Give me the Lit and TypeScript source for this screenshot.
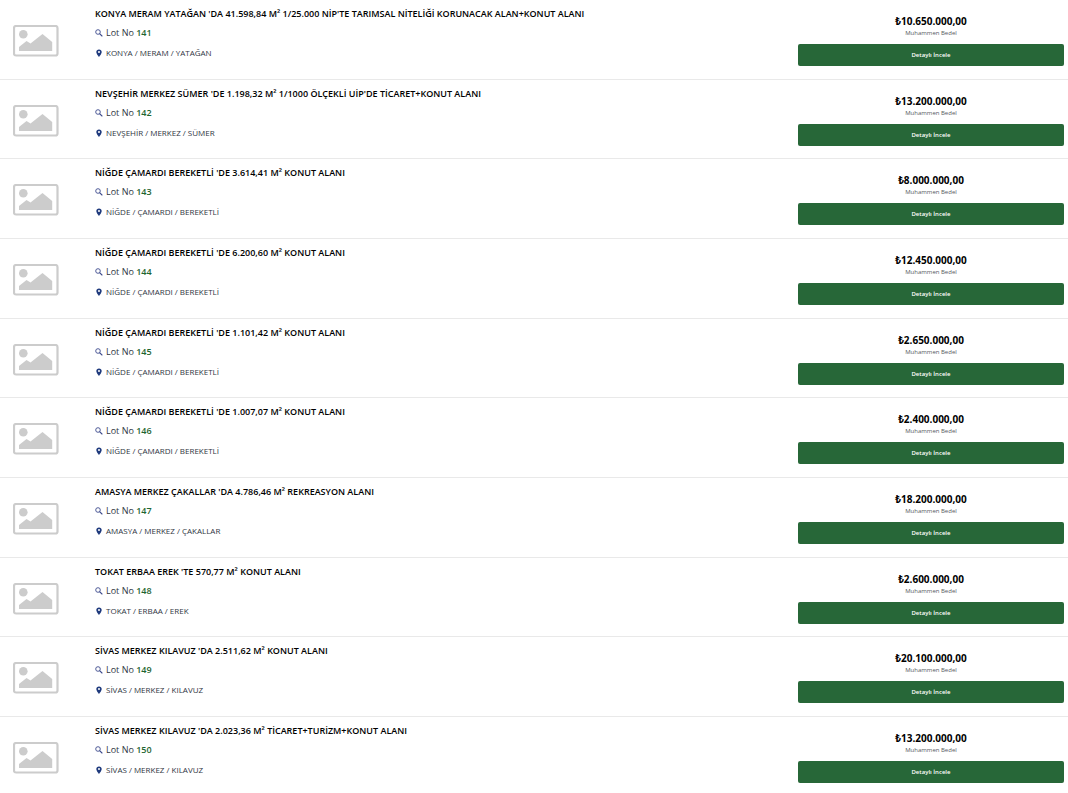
import { LitElement, html, css, svg } from "lit";
import { customElement, property } from "lit/decorators.js";

interface Lot {
  no: number;
  title: string;
  place: string;
  price: string;
}

const LOTS: Lot[] = [
  { no: 141, title: "KONYA MERAM YATAĞAN 'DA 41.598,84 M² 1/25.000 NİP'TE TARIMSAL NİTELİĞİ KORUNACAK ALAN+KONUT ALANI", place: "KONYA / MERAM / YATAĞAN", price: "₺10.650.000,00" },
  { no: 142, title: "NEVŞEHİR MERKEZ SÜMER 'DE 1.198,32 M² 1/1000 ÖLÇEKLİ UİP'DE TİCARET+KONUT ALANI", place: "NEVŞEHİR / MERKEZ / SÜMER", price: "₺13.200.000,00" },
  { no: 143, title: "NİĞDE ÇAMARDI BEREKETLİ 'DE 3.614,41 M² KONUT ALANI", place: "NİĞDE / ÇAMARDI / BEREKETLİ", price: "₺8.000.000,00" },
  { no: 144, title: "NİĞDE ÇAMARDI BEREKETLİ 'DE 6.200,60 M² KONUT ALANI", place: "NİĞDE / ÇAMARDI / BEREKETLİ", price: "₺12.450.000,00" },
  { no: 145, title: "NİĞDE ÇAMARDI BEREKETLİ 'DE 1.101,42 M² KONUT ALANI", place: "NİĞDE / ÇAMARDI / BEREKETLİ", price: "₺2.650.000,00" },
  { no: 146, title: "NİĞDE ÇAMARDI BEREKETLİ 'DE 1.007,07 M² KONUT ALANI", place: "NİĞDE / ÇAMARDI / BEREKETLİ", price: "₺2.400.000,00" },
  { no: 147, title: "AMASYA MERKEZ ÇAKALLAR 'DA 4.786,46 M² REKREASYON ALANI", place: "AMASYA / MERKEZ / ÇAKALLAR", price: "₺18.200.000,00" },
  { no: 148, title: "TOKAT ERBAA EREK 'TE 570,77 M² KONUT ALANI", place: "TOKAT / ERBAA / EREK", price: "₺2.600.000,00" },
  { no: 149, title: "SİVAS MERKEZ KILAVUZ 'DA 2.511,62 M² KONUT ALANI", place: "SİVAS / MERKEZ / KILAVUZ", price: "₺20.100.000,00" },
  { no: 150, title: "SİVAS MERKEZ KILAVUZ 'DA 2.023,36 M² TİCARET+TURİZM+KONUT ALANI", place: "SİVAS / MERKEZ / KILAVUZ", price: "₺13.200.000,00" },
];

const pictureIcon = svg`<svg class="picture" viewBox="0 0 46 32" aria-hidden="true">
  <rect x="1" y="1" width="43.500" height="29.500" rx="2" fill="#fff" stroke="#ccc" stroke-width="2.200"/>
  <circle cx="10.300" cy="9.200" r="4.300" fill="#ccc"/>
  <path d="M6 26v-4l7.500-6 4 2.500L29.500 9l9.700 8v9z" fill="#ccc"/>
</svg>`;

const searchIcon = svg`<svg class="icon" viewBox="0 0 8 8" aria-hidden="true">
  <circle cx="3" cy="3" r="2.300" fill="none" stroke="#3c4a8c" stroke-width=".9"/>
  <path d="M4.800 4.800L7 7" stroke="#3c4a8c" stroke-width="1.100" stroke-linecap="round"/>
</svg>`;

const pinIcon = svg`<svg class="icon" viewBox="0 0 8 8" aria-hidden="true">
  <path fill-rule="evenodd" fill="#1f3a7d" d="M4 .5C2.400.5 1.300 1.600 1.300 3.100 1.300 5 4 8 4 8s2.700-3 2.700-4.900C6.700 1.600 5.600.5 4 .5zM4 2.100a1 1 0 1 1 0 2 1 1 0 0 1 0-2z"/>
</svg>`;

@customElement("lot-row")
class LotRow extends LitElement {
  @property({ attribute: false }) lot!: Lot;

  static styles = css`
    :host {
      display: grid;
      grid-template-columns: 95px minmax(0, 1fr) 25%;
      align-items: start;
      padding: 8px 4px 13px 0;
      border-bottom: 1px solid #e9e9e9;
    }
    .picture {
      display: block;
      width: 46px;
      height: 32px;
      margin: 17px 0 0 13px;
    }
    .title {
      margin: 0 0 7px;
      font-size: 9px;
      line-height: 12px;
      font-weight: 600;
      color: #000;
    }
    .line {
      display: flex;
      align-items: center;
      gap: 3px;
      margin: 0 0 8px;
      font-size: 8px;
      line-height: 12px;
      color: #30363f;
    }
    .line:last-child {
      margin-bottom: 0;
    }
    .lot {
      font-size: 9px;
    }
    .icon {
      flex: none;
      width: 8px;
      height: 8px;
    }
    .number {
      font-weight: 600;
      color: #1f6531;
    }
    .offer {
      display: grid;
      padding-top: 6px;
      text-align: center;
    }
    .price {
      margin: 0;
      font-size: 10px;
      line-height: 14px;
      font-weight: 700;
      color: #000;
    }
    .caption {
      margin: 0 0 6px;
      font-size: 6px;
      line-height: 10px;
      color: #555a60;
    }
    .button {
      height: 22px;
      padding: 0;
      border: 0;
      border-radius: 2px;
      background: #276738;
      color: #fff;
      font: 600 6px/20px "Open Sans", sans-serif;
      cursor: pointer;
    }
  `;

  render() {
    const { no, title, place, price } = this.lot;
    return html`
      ${pictureIcon}
      <div class="details">
        <h2 class="title">${title}</h2>
        <p class="line lot">${searchIcon}<span>Lot No <b class="number">${no}</b></span></p>
        <p class="line">${pinIcon}<span>${place}</span></p>
      </div>
      <div class="offer">
        <p class="price">${price}</p>
        <p class="caption">Muhammen Bedel</p>
        <button class="button" type="button">Detaylı İncele</button>
      </div>
    `;
  }
}

@customElement("app-root")
class AppRoot extends LitElement {
  static styles = css`
    :host {
      display: block;
      background: #fff;
      font-family: "Open Sans", "Noto Sans", sans-serif;
    }
    .row:nth-child(3n + 2) {
      padding-bottom: 12px;
    }
    .row:last-child {
      padding-bottom: 8px;
      border-bottom: 0;
    }
  `;

  render() {
    return html`<main>${LOTS.map((lot) => html`<lot-row class="row" .lot=${lot}></lot-row>`)}</main>`;
  }
}
